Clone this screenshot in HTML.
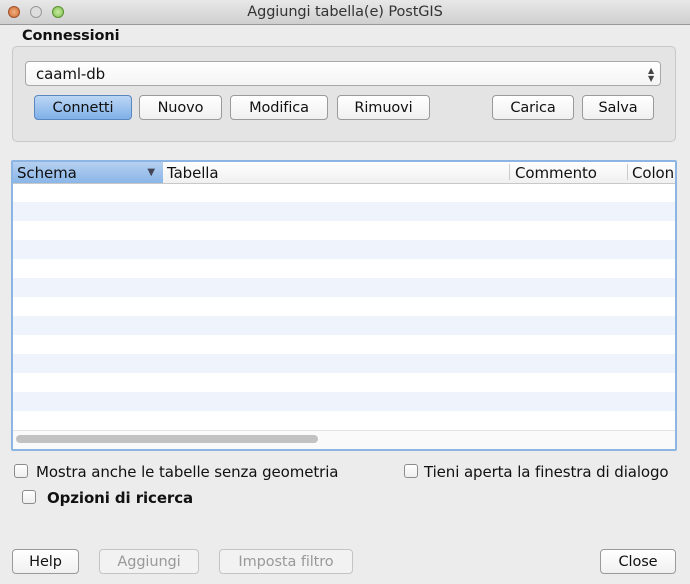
<!DOCTYPE html>
<html><head><style>
body{margin:0;width:690px;height:584px;background:#ececec;font-family:"DejaVu Sans","Liberation Sans",sans-serif;font-size:15px;color:#111;position:relative;overflow:hidden;letter-spacing:-0.1px}
.a{position:absolute;white-space:nowrap}
.title{left:0;top:0;width:690px;height:24px;background:linear-gradient(#e8e8e8,#cfcfcf);border-bottom:1px solid #999;text-align:center;line-height:25px;font-size:14.5px;color:#333}
.dot{width:12px;height:12px;border-radius:50%;top:6px;border:1px solid #999;box-sizing:border-box}
.btn{height:25px;box-sizing:border-box;border:1px solid #9a9a9a;border-radius:4px;background:linear-gradient(#fff,#f0f0f0);text-align:center;line-height:25px;font-size:14.5px}
.dis{color:#999;border-color:#c4c4c4;background:#f2f2f2}
.cb{width:14px;height:14px;box-sizing:border-box;border:1px solid #8c8c8c;border-radius:3px;background:linear-gradient(#fff,#eee)}
</style></head><body>
<div class="a title">Aggiungi tabella(e) PostGIS</div>
<div class="a dot" style="left:8px;background:radial-gradient(#f0b080,#d06a30);border-color:#a0502a"></div>
<div class="a dot" style="left:30px;background:#ddd"></div>
<div class="a dot" style="left:52px;background:radial-gradient(#c8eaa0,#7fbf4f);border-color:#5a9030"></div>
<div class="a" style="left:22px;top:28px;font-weight:bold;font-size:14.5px">Connessioni</div>
<div class="a" style="left:12px;top:46px;width:664px;height:96px;box-sizing:border-box;border:1px solid #c8c8c8;border-radius:5px;background:#e4e4e4"></div>
<div class="a" style="left:25px;top:61px;width:636px;height:25px;box-sizing:border-box;border:1px solid #a8a8a8;border-radius:4px;background:linear-gradient(#fff,#f4f4f4);line-height:25px;padding-left:10px">caaml-db<span style="position:absolute;right:6px;font-size:8px;line-height:8px;top:5px;color:#444">▲<br>▼</span></div>
<div class="a btn" style="left:34px;top:95px;width:98px;border-color:#5b87c0;background:linear-gradient(#bcd6f4,#7fb0e8)">Connetti</div>
<div class="a btn" style="left:139px;top:95px;width:83px">Nuovo</div>
<div class="a btn" style="left:230px;top:95px;width:98px">Modifica</div>
<div class="a btn" style="left:337px;top:95px;width:93px">Rimuovi</div>
<div class="a btn" style="left:492px;top:95px;width:82px">Carica</div>
<div class="a btn" style="left:582px;top:95px;width:72px">Salva</div>
<div class="a" style="left:11px;top:160px;width:666px;height:291px;box-sizing:border-box;border:2px solid #8db5e4;border-radius:2px;background:repeating-linear-gradient(#fff 0 19px,#eef3fc 19px 38px) 0 21px / 100% 100% no-repeat;overflow:hidden">
<div class="a" style="left:0;top:0;width:662px;height:21px;background:linear-gradient(#fff,#f0f0f0);border-bottom:1px solid #c8c8c8;line-height:22px">
<div class="a" style="left:0;top:0;width:150px;height:21px;background:linear-gradient(#b5d0f0,#8ab6e8);padding-left:4px;box-sizing:border-box">Schema<span style="position:absolute;right:8px;font-size:10px;color:#445">▼</span></div>
<div class="a" style="left:154px;top:0">Tabella</div>
<div class="a" style="left:496px;top:2px;height:16px;border-left:1px solid #ccc"></div>
<div class="a" style="left:502px;top:0">Commento</div>
<div class="a" style="left:614px;top:2px;height:16px;border-left:1px solid #ccc"></div>
<div class="a" style="left:619px;top:0">Colon</div>
</div>
<div class="a" style="left:0;top:268px;width:662px;height:19px;background:#fafafa;border-top:1px solid #e4e4e4"></div>
<div class="a" style="left:3px;top:273px;width:302px;height:8px;border-radius:4px;background:#c2c2c2"></div>
</div>
<div class="a cb" style="left:14px;top:464px"></div>
<div class="a" style="left:36px;top:463px">Mostra anche le tabelle senza geometria</div>
<div class="a cb" style="left:404px;top:464px"></div>
<div class="a" style="left:424px;top:463px">Tieni aperta la finestra di dialogo</div>
<div class="a cb" style="left:22px;top:490px"></div>
<div class="a" style="left:47px;top:489px;font-weight:bold">Opzioni di ricerca</div>
<div class="a btn" style="left:12px;top:549px;width:67px">Help</div>
<div class="a btn dis" style="left:99px;top:549px;width:100px">Aggiungi</div>
<div class="a btn dis" style="left:219px;top:549px;width:134px">Imposta filtro</div>
<div class="a btn" style="left:600px;top:549px;width:76px">Close</div>
</body></html>
